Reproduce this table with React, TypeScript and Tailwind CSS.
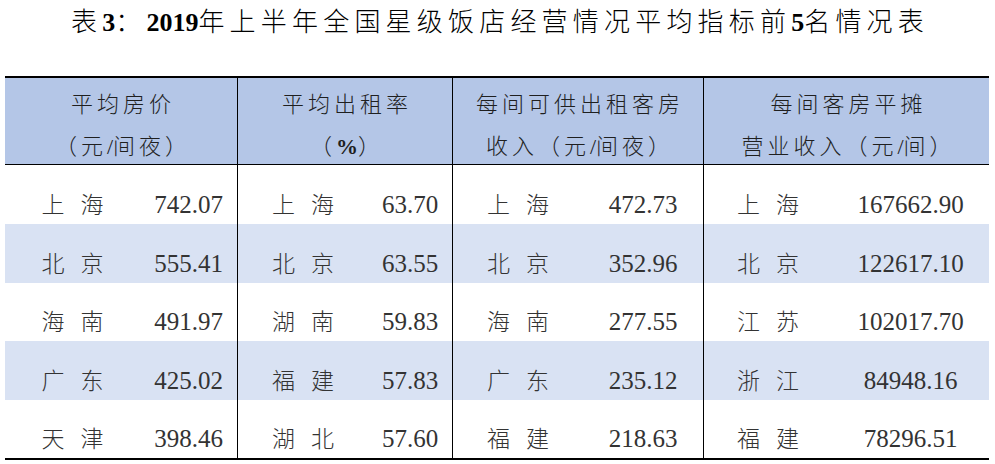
const rows: string[][] = [
  ['上海', '742.07', '上海', '63.70', '上海', '472.73', '上海', '167662.90'],
  ['北京', '555.41', '北京', '63.55', '北京', '352.96', '北京', '122617.10'],
  ['海南', '491.97', '湖南', '59.83', '海南', '277.55', '江苏', '102017.70'],
  ['广东', '425.02', '福建', '57.83', '广东', '235.12', '浙江', '84948.16'],
  ['天津', '398.46', '湖北', '57.60', '福建', '218.63', '福建', '78296.51'],
];

const rowHeights = ['h-[59px]', 'h-[59px]', 'h-[58px]', 'h-[59px]', 'h-[58px]'];

function City({ name }: { name: string }) {
  return (
    <div className="flex items-end justify-center pb-[7px]">
      <span className="flex gap-[16px] text-[23px] leading-none font-light">
        <span>{name[0]}</span>
        <span>{name[1]}</span>
      </span>
    </div>
  );
}

function Num({ value, last }: { value: string; last?: boolean }) {
  return (
    <div className={`flex items-end justify-center pb-[7px] ${last ? '' : 'border-r border-black'}`}>
      <span className="text-[25px] leading-none">{value}</span>
    </div>
  );
}

function HeadCell({ l1, l2, last }: { l1: React.ReactNode; l2: React.ReactNode; last?: boolean }) {
  return (
    <div className={`flex flex-col items-center pt-[16px] text-[22px] font-light tracking-[4px] text-[#1f1f1f] ${last ? '' : 'border-r border-black'}`}>
      <div className="leading-[22px] pl-[4px]">{l1}</div>
      <div className="mt-[20px] leading-[22px] pl-[4px]">{l2}</div>
    </div>
  );
}

export default function App() {
  return (
    <div className="w-[995px] h-[464px] bg-white font-['Liberation_Serif','Noto_Sans_CJK_SC',serif]">
      <div className="h-[76px] pt-[10px] flex justify-center">
        <h1 className="text-[26px] leading-none font-light text-black tracking-[5.2px] pl-[5px]">
          表<b className="font-bold tracking-normal">3</b>：<b className="font-bold tracking-normal">2019</b>年上半年全国星级饭店经营情况平均指标前<b className="font-bold tracking-normal">5</b>名情况表
        </h1>
      </div>

      <div className="ml-[5px] w-[984px] border-t-2 border-b-2 border-black">
        {/* header */}
        <div className="grid grid-cols-[233px_215px_251px_285px] h-[87px] bg-[#b4c6e7] border-b border-black">
          <HeadCell l1="平均房价" l2={<>（元<span className="tracking-normal">/</span>间夜）</>} />
          <HeadCell l1="平均出租率" l2={<>（<b className="font-bold tracking-normal">%</b>）</>} />
          <HeadCell l1="每间可供出租客房" l2={<>收入（元<span className="tracking-normal">/</span>间夜）</>} />
          <HeadCell l1="每间客房平摊" l2={<>营业收入（元<span className="tracking-normal">/</span>间）</>} last />
        </div>

        {/* body */}
        {rows.map((r, i) => (
          <div
            key={i}
            className={`grid grid-cols-[135px_98px_130px_85px_130px_121px_128px_157px] text-[#333] ${rowHeights[i]} ${
              i % 2 === 1 ? 'bg-[#d9e2f3]' : 'bg-white'
            }`}
          >
            <City name={r[0]} />
            <Num value={r[1]} />
            <City name={r[2]} />
            <Num value={r[3]} />
            <City name={r[4]} />
            <Num value={r[5]} />
            <City name={r[6]} />
            <Num value={r[7]} last />
          </div>
        ))}
      </div>
    </div>
  );
}
